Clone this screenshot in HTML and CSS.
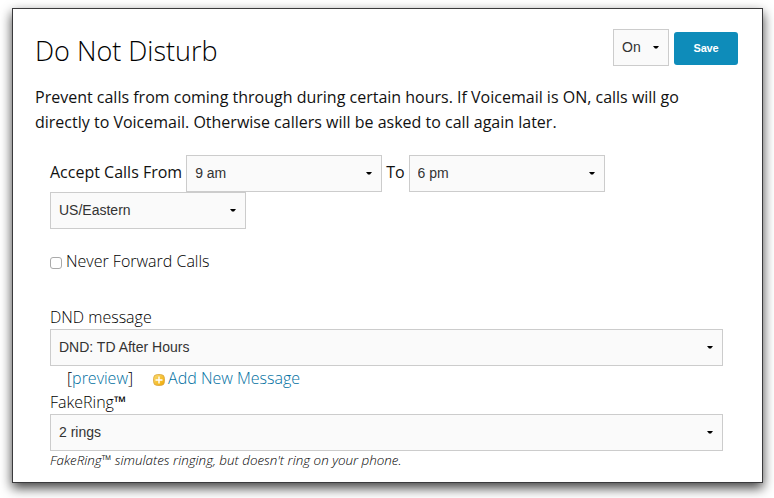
FILE: index.html
```html
<!DOCTYPE html>
<html lang="en">
<head>
    <meta charset="UTF-8">
    <title>Do Not Disturb</title>
    <link rel="stylesheet" href="styles.css">
</head>
<body>
<form class="panel">
    <div class="header">
        <h1>Do Not Disturb</h1>
        <div class="actions">
            <select class="status-select">
                <option>On</option>
                <option>Off</option>
            </select>
            <button type="button" class="save-button">Save</button>
        </div>
    </div>

    <p class="description">Prevent calls from coming through during certain hours. If Voicemail is ON, calls will go directly to Voicemail. Otherwise callers will be asked to call again later.</p>

    <div class="settings">
        <!-- Hours -->
        <div class="hours">
            <label for="from">Accept Calls From</label>
            <select id="from"><option>9 am</option></select>
            <label for="to">To</label>
            <select id="to"><option>6 pm</option></select>
        </div>
        <select class="timezone"><option>US/Eastern</option></select>

        <div class="never-forward">
            <input type="checkbox" id="never">
            <label for="never">Never Forward Calls</label>
        </div>

        <!-- Message -->
        <label class="field-label" for="message">DND message</label>
        <select id="message" class="wide"><option>DND: TD After Hours</option></select>
        <div class="links">
            <span class="preview">[<a href="#">preview</a>]</span>
            <svg class="add-icon" width="12" height="12" viewBox="0 0 12 12">
                <defs>
                    <linearGradient id="gold" x1="0" y1="0" x2="1" y2="1">
                        <stop offset="0" stop-color="#fbdc70"/>
                        <stop offset="1" stop-color="#f0a800"/>
                    </linearGradient>
                </defs>
                <rect x="0.5" y="0.5" width="11" height="11" rx="4" fill="url(#gold)" stroke="#d9a441" stroke-width="0.8"/>
                <path d="M6 2.5v7M2.5 6h7" stroke="#fff" stroke-width="1.4"/>
            </svg>
            <a href="#">Add New Message</a>
        </div>

        <!-- FakeRing -->
        <label class="field-label ring-label" for="rings">FakeRing<span class="tm">™</span></label>
        <select id="rings" class="wide"><option>2 rings</option></select>
        <p class="hint">FakeRing™ simulates ringing, but doesn't ring on your phone.</p>
    </div>
</form>
</body>
</html>
```

FILE: styles.css
```css
* {
    box-sizing: border-box;
}

body {
    margin: 0;
    padding: 8px 11px 15px 12px;
    height: 498px;
    overflow: hidden;
    background-color: #fff;
    color: #111;
    font-family: "Open Sans", sans-serif;
    font-size: 16px;
}

.panel {
    height: 475px;
    padding: 20px 24px 0 22px;
    border: 1px solid #3a3a3c;
    background-color: #fff;
    box-shadow: 0 5px 11px rgba(0, 0, 0, 0.75);
}

.header {
    display: flex;
    justify-content: space-between;
    height: 56px;
}

h1 {
    margin: 0;
    color: #000;
    font-size: 27px;
    font-weight: 300;
    line-height: 44px;
}

.actions {
    display: flex;
    align-items: flex-start;
    gap: 5px;
}

select {
    appearance: none;
    width: 196px;
    height: 37px;
    margin: 0;
    padding: 0 8px 2px;
    border: 1px solid #ccc;
    border-radius: 0;
    background: #fafafa url("data:image/svg+xml,%3Csvg xmlns='http://www.w3.org/2000/svg' width='6' height='3'%3E%3Cpath d='M0 0h6L4 2.5H2z'/%3E%3C/svg%3E") no-repeat right 9px top 16px;
    color: #333;
    font-family: "Liberation Sans", Arial, sans-serif;
    font-size: 14px;
}

.status-select {
    width: 56px;
}

.save-button {
    width: 64px;
    height: 33px;
    margin-top: 3px;
    padding: 0 0 1px;
    border: none;
    border-radius: 3px;
    background-color: #0e8cba;
    color: #fff;
    font-family: "Liberation Sans", Arial, sans-serif;
    font-size: 11px;
    font-weight: bold;
    letter-spacing: -0.2px;
}

.description {
    max-width: 665px;
    margin: 0;
    line-height: 25px;
}

.settings {
    display: flex;
    flex-direction: column;
    align-items: flex-start;
    padding: 20px 15px 0;
}

.hours {
    display: flex;
    align-items: center;
    gap: 4px;
    height: 37px;
}

.hours label {
    padding-bottom: 3px;
}

.never-forward {
    display: flex;
    align-items: center;
    gap: 4px;
    height: 24px;
    margin: 20px 0 32px;
    color: #000;
    font-weight: 300;
}

.never-forward input {
    appearance: none;
    width: 12px;
    height: 12px;
    margin: 4px 0 0;
    border: 1px solid #aaa;
    border-radius: 3px;
    background-color: #fff;
}

.field-label {
    height: 24px;
    color: #000;
    font-weight: 300;
    line-height: 24px;
}

.tm {
    font-weight: 400;
}

.wide {
    width: 100%;
}

.links {
    display: flex;
    align-items: center;
    height: 24px;
    padding-left: 17px;
    color: #000;
    font-weight: 300;
}

.links a {
    color: #006f9f;
    text-decoration: none;
}

.preview {
    margin-right: 20px;
}

.add-icon {
    margin: 3px 3px 0 0;
}

.hint {
    margin: 0;
    color: #000;
    font-size: 13.4px;
    font-style: italic;
    font-weight: 300;
    line-height: 19px;
}
```
